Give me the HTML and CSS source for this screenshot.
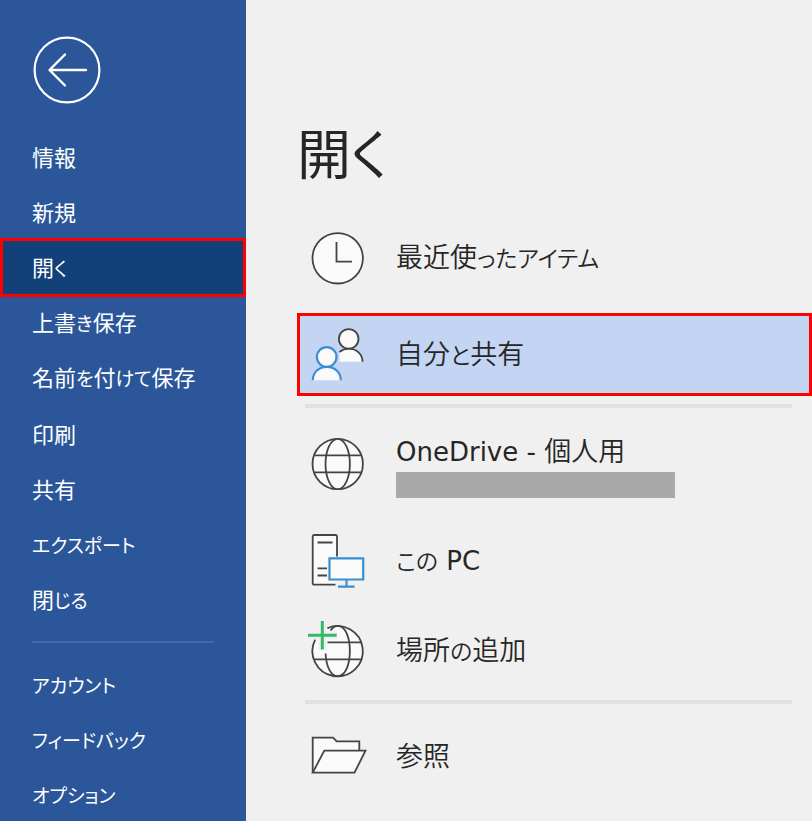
FILE: index.html
```html
<!DOCTYPE html>
<html lang="ja">
<head>
<meta charset="utf-8">
<title>開く</title>
<link rel="stylesheet" href="styles.css">
</head>
<body>
<div class="backstage">
  <nav class="sidebar">
    <button class="back" type="button" aria-label="戻る">
      <svg viewBox="0 0 68 68" fill="none" stroke="#fff" stroke-width="2.2" stroke-linecap="round" stroke-linejoin="round">
        <circle cx="34" cy="34" r="32.4"/>
        <path d="M53 34H17M32 18.5 16.5 34 32 49.5" stroke-width="2.4"/>
      </svg>
    </button>
    <ul class="menu menu-main">
      <li><button type="button">情報</button></li>
      <li><button type="button">新規</button></li>
      <li class="active"><button type="button">開<span class="kana">く</span></button></li>
      <li><button type="button">上書<span class="kana">き</span>保存</button></li>
      <li><button type="button">名前<span class="kana">を</span>付<span class="kana">けて</span>保存</button></li>
      <li><button type="button">印刷</button></li>
      <li><button type="button">共有</button></li>
      <li><button type="button"><span class="kana">エクスポート</span></button></li>
      <li><button type="button">閉<span class="kana">じる</span></button></li>
    </ul>
    <hr class="menu-rule">
    <ul class="menu menu-extra">
      <li><button type="button"><span class="kana">アカウント</span></button></li>
      <li><button type="button"><span class="kana">フィードバック</span></button></li>
      <li><button type="button"><span class="kana">オプション</span></button></li>
    </ul>
  </nav>
  <main class="content">
    <h1>開く</h1>
    <button class="place recent" type="button">
      <svg class="icon" viewBox="0 0 60 60">
        <circle cx="29.7" cy="30.3" r="25.2"/>
        <path d="M28.5 14V33.7H44" fill="none"/>
      </svg>
      <span class="label">最近使<span class="kana">ったアイテム</span></span>
    </button>
    <button class="place selected" type="button">
      <svg class="icon" viewBox="0 0 60 60">
        <path d="M31.5 36.7V26.5Q35.5 23.7 40.7 23.7C48.5 23.7 54.5 29 54.5 36.7Z" stroke="none"/>
        <path d="M31.5 27Q35.5 23.7 40.7 23.7C48.5 23.7 54.5 29 54.5 36.7" fill="none"/>
        <circle cx="40.7" cy="13.9" r="9.8"/>
        <g class="blue">
          <path d="M4.8 55.3C4.8 47.3 11 41.8 18.8 41.8S32.8 47.3 32.8 55.3"/>
          <circle cx="18.7" cy="32" r="9.8"/>
        </g>
      </svg>
      <span class="label">自分<span class="kana">と</span>共有</span>
    </button>
    <hr class="place-rule">
    <button class="place onedrive" type="button">
      <svg class="icon" viewBox="0 0 60 60">
        <circle cx="29.7" cy="30" r="25.2"/>
        <ellipse cx="29.7" cy="30" rx="12.2" ry="25.2"/>
        <path d="M6.3 21.3H53M6.3 38.3H53" fill="none"/>
      </svg>
      <span class="account"><span class="latin">OneDrive - </span>個人用<span class="address"></span></span>
    </button>
    <button class="place" type="button">
      <svg class="icon" viewBox="0 0 60 60">
        <rect x="4.7" y="4" width="24.3" height="49.7" rx="1.5"/>
        <path d="M9.5 11.5H24.5M9.5 37.3H19M9.5 44.5H19"/>
        <path d="M30.5 25.5H19.5V50.5H27.5V56H31Z" class="knockout"/>
        <path d="M21.5 27.3H55.2V48.5H21.5ZM38.5 48.5V55.6M30 55.6H46.5" class="blue"/>
      </svg>
      <span class="label"><span class="kana">この</span><span class="latin"> PC</span></span>
    </button>
    <button class="place" type="button">
      <svg class="icon" viewBox="0 0 60 60">
        <circle cx="29.7" cy="30" r="25.2" stroke="none"/>
        <path d="M1 14.3H29M14.3 1V29" class="gap"/>
        <g fill="none">
          <path d="M19.3 7.2A25.2 25.2 0 1 1 7.2 18.7"/>
          <path d="M29.7 4.8C45.9 4.8 45.9 55.2 29.7 55.2C22.5 55.2 18 44.5 17.6 32.5M29.7 4.8Q26 4.8 22.5 9.5"/>
          <path d="M19.5 21.3H53M6.3 38.3H53"/>
        </g>
        <path d="M0 14.3H28.7M14.3 0V28.5" class="plus"/>
      </svg>
      <span class="label">場所<span class="kana">の</span>追加</span>
    </button>
    <hr class="place-rule">
    <button class="place browse" type="button">
      <svg class="icon" viewBox="0 0 60 60">
        <path d="M4.7 46.7V11.7H25L28.7 15.3H51.3V24.7"/>
        <path d="M4.7 46.7 16.3 24.7H57.5L46.5 46.7Z"/>
      </svg>
      <span class="label">参照</span>
    </button>
  </main>
</div>
</body>
</html>
```
FILE: styles.css
```css
* {
  box-sizing: border-box;
}

body {
  margin: 0;
  background: #f0f0f0;
  font-family: "Noto Sans CJK JP", sans-serif;
  font-feature-settings: "palt";
}

button {
  padding: 0;
  border: 0;
  background: none;
  color: inherit;
  font: inherit;
  font-feature-settings: inherit;
  text-align: left;
  cursor: pointer;
}

hr {
  margin: 0;
  border: 0;
}

.backstage {
  display: grid;
  grid-template-columns: 246px 1fr;
  height: 100vh;
  overflow: hidden;
}

.sidebar {
  min-height: 0;
  padding-top: 36px;
  background: #2b579a;
  color: #fff;
  font-size: 22px;
}

.back {
  display: block;
  width: 68px;
  height: 68px;
  margin: 0 0 25px 33px;
}

.back svg {
  display: block;
}

.menu {
  display: grid;
  grid-auto-rows: 1fr;
  margin: 0;
  padding: 0;
  list-style: none;
}

.menu-main {
  min-height: 499px;
}

.menu-extra {
  min-height: 166px;
}

.menu li {
  display: flex;
}

.menu button {
  flex: 1;
  padding: 0 0 2px 32px;
  line-height: 32px;
}

.menu .kana {
  font-size: 19px;
}

.menu .active {
  margin: -2px 0;
}

.menu .active button {
  padding-left: 29px;
  border: 3px solid #f00;
  background: #124078;
}

.menu-rule {
  height: 2px;
  margin: 13px 32px 14px;
  background: #4169a8;
}

.content {
  display: flex;
  flex-direction: column;
  min-width: 0;
  padding-left: 51px;
  color: #262626;
}

h1 {
  margin: 112px 0 24px;
  font-size: 54px;
  font-weight: 400;
  line-height: 80px;
}

.place {
  display: flex;
  flex: none;
  align-items: center;
  gap: 28px;
  height: 90px;
  padding-left: 11px;
  font-size: 27px;
  font-weight: 350;
  line-height: 36px;
}

.place .kana {
  font-size: 23px;
}

.place .latin {
  font-family: "DejaVu Sans", sans-serif;
  font-size: 26px;
  font-weight: 400;
}

.label {
  padding-bottom: 3px;
}

.recent {
  height: 84px;
}

.selected {
  height: 83px;
  margin: 13px 0 4px;
  padding-left: 8px;
  border: 3px solid #f00;
  background: #c3d5f3;
}

.onedrive {
  height: 104px;
}

.browse {
  height: 96px;
}

.account {
  padding-top: 2px;
}

.address {
  display: block;
  width: 279px;
  height: 26px;
  margin-top: 2px;
  background: #a9a9a9;
}

.place-rule {
  flex: none;
  height: 4px;
  margin: 4px 20px 4px 8px;
  background: #e1e1e1;
}

.icon {
  flex: none;
  width: 60px;
  height: 60px;
  fill: #fafafa;
  stroke: #444;
  stroke-width: 1.8;
}

.icon .blue {
  stroke: #3a8fd0;
  stroke-width: 2.2;
}

.icon .knockout {
  fill: #f0f0f0;
  stroke: none;
}

.icon .gap {
  stroke: #f0f0f0;
  stroke-width: 8;
}

.icon .plus {
  stroke: #35b867;
  stroke-width: 3;
}
```
